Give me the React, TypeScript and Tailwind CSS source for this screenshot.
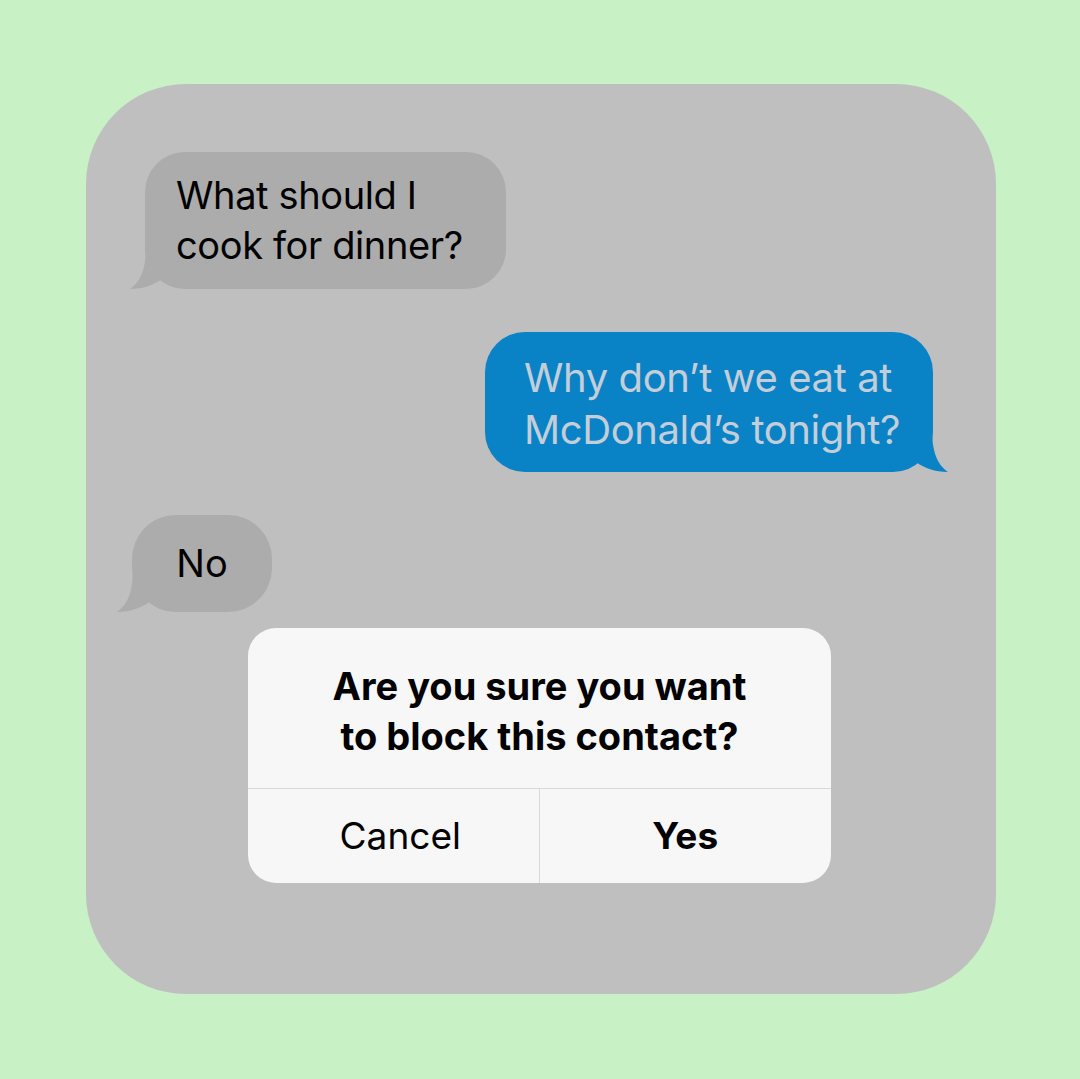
const font = { fontFamily: "Inter, 'Noto Sans', sans-serif" };

function TailLeft({ color }: { color: string }) {
  return (
    <svg className="absolute bottom-0 -left-[15px]" width="40" height="44" viewBox="0 0 40 44">
      <path d="M16 0 C16 24 11 36 0 44 C13 44 24 40 32 34 L40 0 Z" fill={color} />
    </svg>
  );
}

function TailRight({ color }: { color: string }) {
  return (
    <svg className="absolute bottom-0 -right-[15px]" width="40" height="44" viewBox="0 0 40 44">
      <path d="M24 0 C24 24 29 36 40 44 C27 44 16 40 8 34 L0 0 Z" fill={color} />
    </svg>
  );
}

export default function App() {
  return (
    <div className="w-[1080px] h-[1079px] bg-[#c8f1c5] pt-[84px] pl-[86px]" style={font}>
      <div className="w-[910px] h-[910px] rounded-[100px] bg-[#bfbfbf] flex flex-col pt-[68px]">
        <div className="relative self-start ml-[59px] w-[361px] h-[137px] rounded-[40px] bg-[#acacac] px-[31px] pt-[18px] text-[38px] leading-[50px] text-black tracking-[-0.01em]">
          <TailLeft color="#acacac" />
          <p className="relative">What should I</p>
          <p className="relative">cook for dinner?</p>
        </div>

        <div className="relative self-end mr-[63px] mt-[43px] w-[448px] h-[140px] rounded-[40px] bg-[#0a82c6] pl-[39px] pt-[20px] text-[40px] leading-[52px] text-[#c4ced8] tracking-[-0.01em]">
          <TailRight color="#0a82c6" />
          <p className="relative">Why don’t we eat at</p>
          <p className="relative">McDonald’s tonight?</p>
        </div>

        <div className="relative self-start ml-[46px] mt-[43px] w-[140px] h-[97px] rounded-[44px] bg-[#acacac] flex items-center justify-center text-[38px] text-black">
          <TailLeft color="#acacac" />
          <span className="relative">No</span>
        </div>

        <div className="ml-[162px] mt-[16px] w-[583px] h-[255px] rounded-[28px] bg-[#f7f7f7] flex flex-col overflow-hidden">
          <div className="h-[160px] flex flex-col items-center justify-center pt-[6px] text-[38px] leading-[50px] font-bold text-black">
            <p>Are you sure you want</p>
            <p>to block this contact?</p>
          </div>
          <div className="flex-1 grid grid-cols-2 border-t border-[#d9d9d9]">
            <div className="flex items-center justify-center pl-[14px] text-[37px] text-black border-r border-[#d9d9d9]">
              Cancel
            </div>
            <div className="flex items-center justify-center text-[37px] font-bold text-black">
              Yes
            </div>
          </div>
        </div>
      </div>
    </div>
  );
}
